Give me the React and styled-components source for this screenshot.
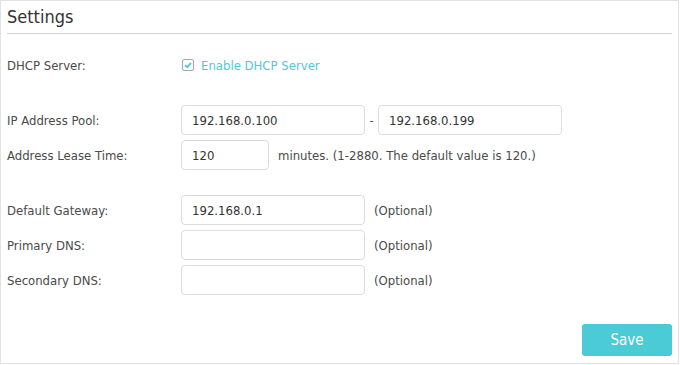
import React from "react";
import styled, { createGlobalStyle } from "styled-components";

const Global = createGlobalStyle`
  html, body { margin: 0; padding: 0; background: #fff; }
  body { font-family: "DejaVu Sans Condensed", "DejaVu Sans", sans-serif; font-size: 13px; color: #444; }
  * { box-sizing: border-box; }
`;

const Panel = styled.div`
  width: 679px;
  height: 364px;
  border: 1px solid #e2e2e2;
  padding: 0 6px 0 6px;
  display: flex;
  flex-direction: column;
`;

const Title = styled.h2`
  margin: 0;
  height: 32px;
  display: flex;
  align-items: center;
  font-weight: normal;
  font-size: 18px;
  color: #333;
  padding-bottom: 2px;
`;

const Divider = styled.div`
  height: 1px;
  background: #cfcfcf;
  width: 665px;
`;

const Form = styled.div`
  display: flex;
  flex-direction: column;
  margin-top: 16px;
`;

const Section = styled.div`
  display: flex;
  flex-direction: column;
  gap: 5px;
  margin-bottom: 25px;
`;

const Row = styled.div`
  display: flex;
  align-items: center;
  height: 30px;
`;

const Label = styled.div`
  width: 174px;
  flex-shrink: 0;
  color: #4a4a4a;
`;

const Input = styled.input`
  width: ${(p) => p.$w || 184}px;
  height: 30px;
  border: 1px solid #dcdcdc;
  border-radius: 4px;
  padding: 0 10px;
  font: inherit;
  color: #333;
  background: #fff;
  outline: none;
`;

const Note = styled.span`
  margin-left: 9px;
  color: #4a4a4a;
`;

const Dash = styled.span`
  width: 13px;
  text-align: center;
  color: #555;
`;

const CheckWrap = styled.label`
  display: flex;
  align-items: center;
  gap: 7px;
  color: #4acbd6;
  margin-left: 1px;
`;

const Box = styled.span`
  width: 12px;
  height: 12px;
  border: 1px solid #a8a8a8;
  border-radius: 2px;
  display: flex;
  align-items: center;
  justify-content: center;
`;

const Footer = styled.div`
  display: flex;
  justify-content: flex-end;
  margin-top: auto;
  padding-bottom: 7px;
`;

const SaveButton = styled.button`
  width: 90px;
  height: 32px;
  border: none;
  border-radius: 3px;
  background: #4acbd6;
  color: #fff;
  font: inherit;
  font-size: 15px;
`;

export default function App() {
  return (
    <>
      <Global />
      <Panel>
        <Title>Settings</Title>
        <Divider />
        <Form>
          <Section>
            <Row>
              <Label>DHCP Server:</Label>
              <CheckWrap>
                <Box>
                  <svg width="10" height="10" viewBox="0 0 10 10">
                    <path d="M2 5.2 L4.2 7.2 L8 2.8" fill="none" stroke="#4acbd6" strokeWidth="1.8" />
                  </svg>
                </Box>
                Enable DHCP Server
              </CheckWrap>
            </Row>
          </Section>
          <Section>
            <Row>
              <Label>IP Address Pool:</Label>
              <Input defaultValue="192.168.0.100" />
              <Dash>-</Dash>
              <Input defaultValue="192.168.0.199" />
            </Row>
            <Row>
              <Label>Address Lease Time:</Label>
              <Input $w={88} defaultValue="120" />
              <Note>minutes. (1-2880. The default value is 120.)</Note>
            </Row>
          </Section>
          <Section>
            <Row>
              <Label>Default Gateway:</Label>
              <Input defaultValue="192.168.0.1" />
              <Note>(Optional)</Note>
            </Row>
            <Row>
              <Label>Primary DNS:</Label>
              <Input defaultValue="" />
              <Note>(Optional)</Note>
            </Row>
            <Row>
              <Label>Secondary DNS:</Label>
              <Input defaultValue="" />
              <Note>(Optional)</Note>
            </Row>
          </Section>
        </Form>
        <Footer>
          <SaveButton>Save</SaveButton>
        </Footer>
      </Panel>
    </>
  );
}
